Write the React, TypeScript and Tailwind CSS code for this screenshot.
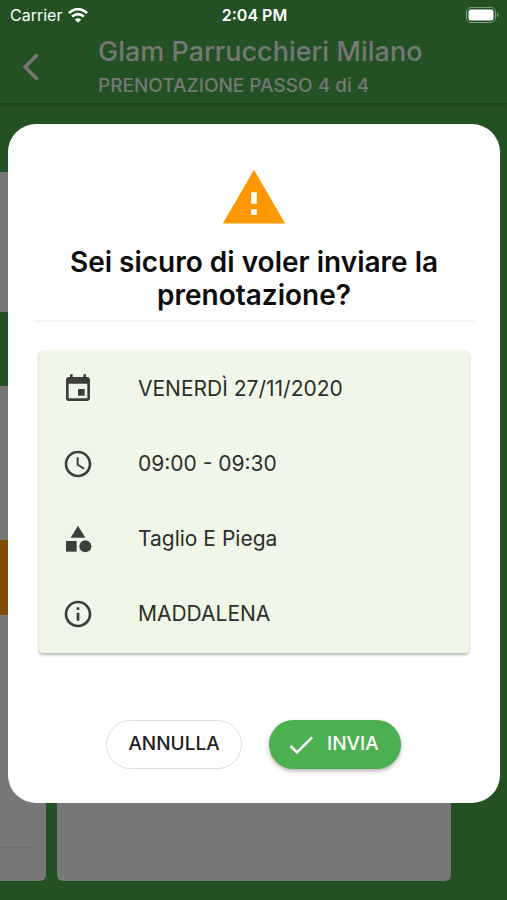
import type { IconType } from "react-icons";
import {
  MdAccessTime,
  MdCategory,
  MdCheck,
  MdEvent,
  MdInfoOutline,
  MdWarning,
} from "react-icons/md";

const details: { icon: IconType; text: string }[] = [
  { icon: MdEvent, text: "VENERDÌ 27/11/2020" },
  { icon: MdAccessTime, text: "09:00 - 09:30" },
  { icon: MdCategory, text: "Taglio E Piega" },
  { icon: MdInfoOutline, text: "MADDALENA" },
];

function StatusBar() {
  return (
    <div className="grid h-[30px] grid-cols-3 items-center pr-2 pl-[10px] text-base text-white">
      <div className="flex items-center gap-[6px]">
        <span>Carrier</span>
        <svg viewBox="0 0 20 15" className="h-[15px] w-5" fill="none" stroke="currentColor">
          <path d="M1 5.2C6-.2 14-.2 19 5.2" strokeWidth="2.7" />
          <path d="M4.2 8.7c3.4-3.4 8.2-3.4 11.6 0" strokeWidth="2.6" />
          <path d="M10 14.8l-3.2-3.2c1.8-1.7 4.6-1.7 6.4 0z" fill="currentColor" stroke="none" />
        </svg>
      </div>
      <span className="text-center font-semibold">2:04 PM</span>
      <svg viewBox="0 0 33 16" className="h-4 w-[33px] justify-self-end" fill="none">
        <rect x="0.5" y="0.5" width="29" height="15" rx="4.5" stroke="#7f9a7f" />
        <rect x="2.5" y="2.5" width="25" height="11" rx="2.5" fill="#fff" />
        <path d="M31 5.5c2 .7 2 4.3 0 5z" fill="#7f9a7f" />
      </svg>
    </div>
  );
}

function Header() {
  return (
    <header className="flex h-[74px] items-center border-b border-[#1b431b] shadow-[0_2px_3px_rgba(0,0,0,0.2)]">
      <button type="button" aria-label="Indietro" className="w-[98px] pl-[22px] text-[#777]">
        <svg viewBox="0 0 18 28" className="h-7 w-[18px]" fill="none" stroke="currentColor" strokeWidth="3.4">
          <path d="M15.5 1.5L3 14l12.5 12.5" />
        </svg>
      </button>
      <div className="min-w-0 pt-0.5 font-medium whitespace-nowrap text-[#777]">
        <h1 className="text-[27px] leading-9">Glam Parrucchieri Milano</h1>
        <p className="text-[19px] leading-8">PRENOTAZIONE PASSO 4 di 4</p>
      </div>
    </header>
  );
}

function BookingColumns() {
  return (
    <main className="flex flex-1 gap-[11px] pt-[68px] pr-14 pb-[19px]">
      <section className="flex w-[46px] flex-col overflow-hidden rounded-br-md bg-[#777]">
        <div className="h-[140px]" />
        <div className="h-[74px] bg-[#235123]" />
        <div className="h-[154px]" />
        <div className="h-[75px] bg-[#7f4c00]" />
        <div className="mr-3 h-[233px] border-b border-[#6d6d6d]" />
      </section>
      <section className="flex-1 rounded-md bg-[#777]" />
    </main>
  );
}

function ConfirmDialog() {
  return (
    <div
      role="dialog"
      aria-modal="true"
      aria-labelledby="confirm-title"
      className="absolute inset-x-0 top-[124px] mr-[7px] ml-2 rounded-[28px] bg-white pt-10 pb-[34px]"
    >
      <MdWarning className="mx-auto size-[68px] text-[#ff9800]" />
      <div className="mx-[26px] border-b-2 border-[#f3f3f3] pt-[14px] pb-2">
        <h2 id="confirm-title" className="text-center text-[28px] leading-[33px] font-semibold text-[#0c0c0c]">
          Sei sicuro di voler inviare la prenotazione?
        </h2>
      </div>
      <ul className="mx-[31px] mt-7 rounded bg-[#f0f7e6] pt-px pb-0.5 shadow-[0_2px_3px_rgba(0,0,0,0.28)]">
        {details.map(({ icon: Icon, text }) => (
          <li key={text} className="flex h-[75px] items-center gap-11 pl-[23px]">
            <Icon className="size-8 text-[#3c3f39]" />
            <span className="text-[21px] text-[#2c2e2a]">{text}</span>
          </li>
        ))}
      </ul>
      <div className="mt-[67px] flex justify-center gap-[27px] pr-px text-[19px] font-medium">
        <button
          type="button"
          className="h-[49px] w-[136px] rounded-full border border-[#dedede] text-[#1c1c1c]"
        >
          ANNULLA
        </button>
        <button
          type="button"
          className="flex h-[49px] w-[132px] items-center gap-[10px] rounded-full bg-[#4caf50] pl-4 text-white shadow-[0_2px_4px_rgba(0,0,0,0.3)]"
        >
          <MdCheck className="size-8" />
          INVIA
        </button>
      </div>
    </div>
  );
}

export default function App() {
  return (
    <div className="relative flex min-h-screen flex-col overflow-hidden bg-[#235123] font-['Inter',sans-serif]">
      <StatusBar />
      <Header />
      <BookingColumns />
      <ConfirmDialog />
    </div>
  );
}
